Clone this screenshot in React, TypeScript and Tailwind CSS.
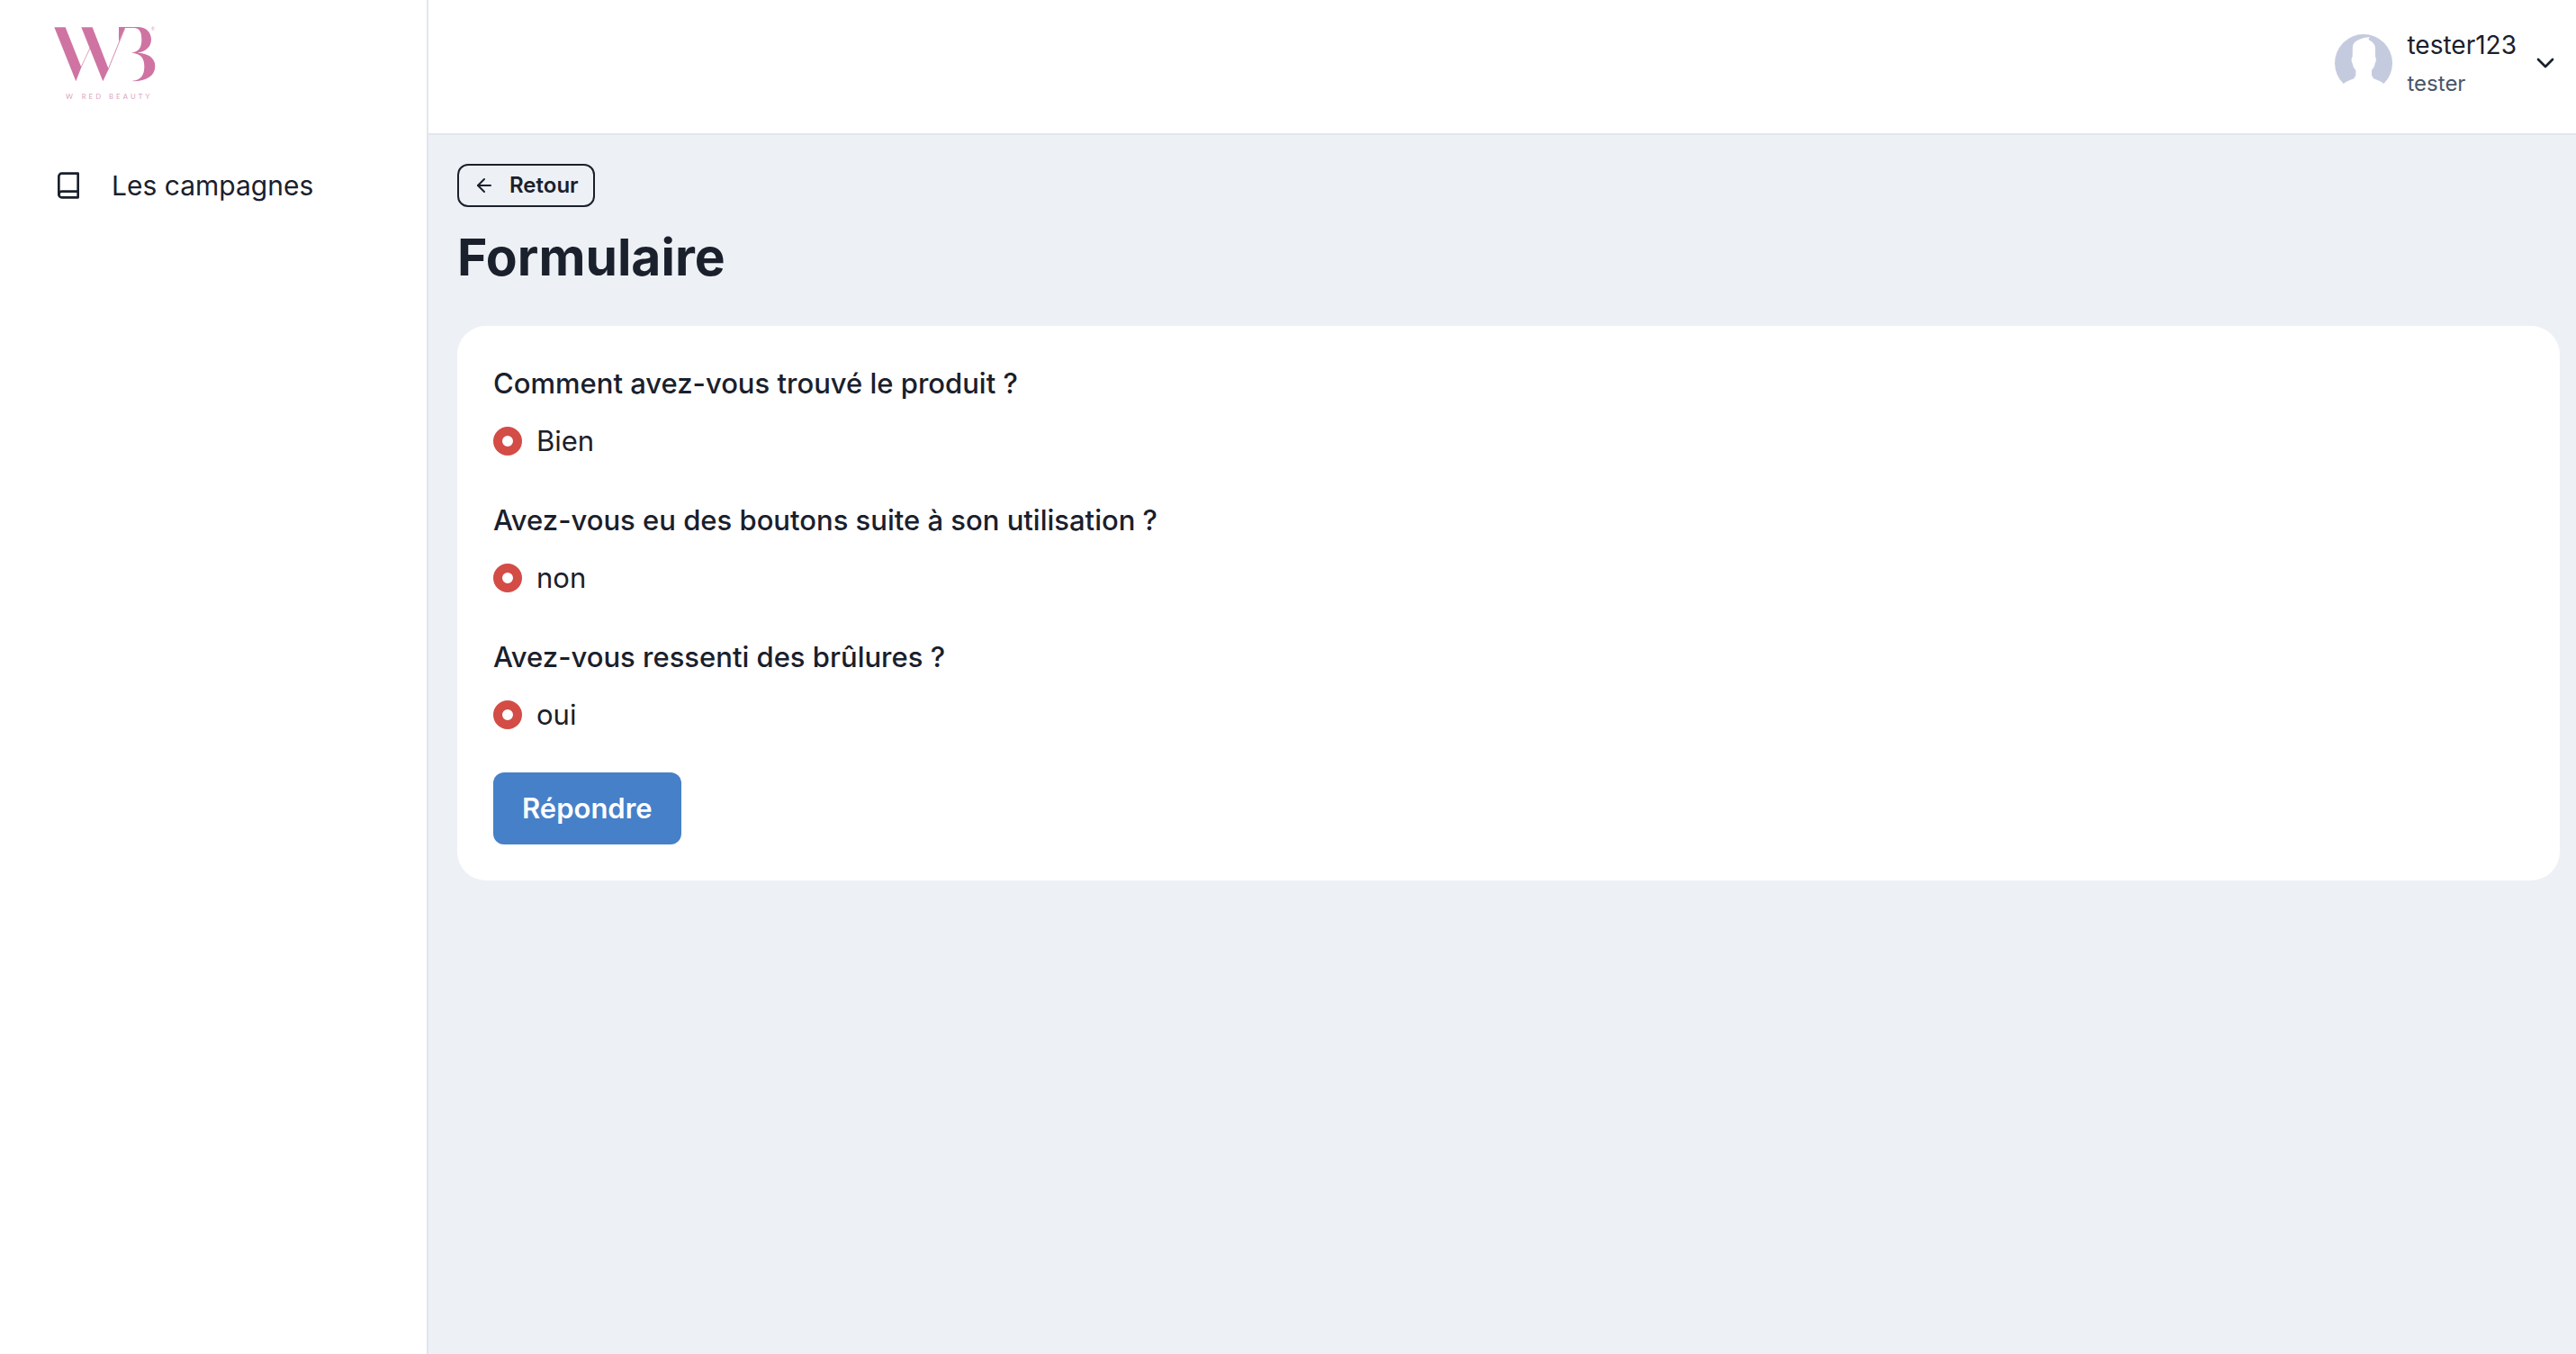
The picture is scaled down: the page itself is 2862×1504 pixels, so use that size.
import { FiArrowLeft, FiBook, FiChevronDown } from "react-icons/fi";

const questions = [
  { id: "produit", title: "Comment avez-vous trouvé le produit ?", answer: "Bien" },
  { id: "boutons", title: "Avez-vous eu des boutons suite à son utilisation ?", answer: "non" },
  { id: "brulures", title: "Avez-vous ressenti des brûlures ?", answer: "oui" },
];

function Logo() {
  return (
    <svg viewBox="60 48 348 258" className="h-[86px] w-[116px]" role="img" aria-label="W Red Beauty">
      <g fill="#cf74a2">
        <path d="M61 61H98L151 194L133 241Z" />
        <path d="M151 61H188L242 200L223 241Z" />
        <path d="M276 61H297L276 109Z" />
        <path d="M276 60H338C368 60 384 78 384 102C384 126 366 142 338 146C374 147 397 163 397 190C397 221 372 241 322 241V239C350 237 361 219 361 192C361 165 351 148 318 146C344 143 352 126 352 103C352 78 347 64 326 63H276Z" />
      </g>
      <path d="M150 194L180 130" stroke="#cf74a2" strokeWidth="2" />
      <path d="M240 202L296 64" stroke="#cf74a2" strokeWidth="2.5" />
      <text x="383" y="72" fontSize="15" fill="#dfa3c2" fontFamily="Lato, sans-serif">®</text>
      <text y="299" fontSize="23" letterSpacing="9.5" fill="#dda4c1" fontFamily="Lato, sans-serif">
        <tspan x="99">W </tspan>
        <tspan x="152">RED </tspan>
        <tspan x="243">BEAUTY</tspan>
      </text>
    </svg>
  );
}

function Avatar() {
  return (
    <svg viewBox="0 0 192 192" className="size-16" aria-hidden="true">
      <path
        fill="#c5cbdf"
        d="M29 165A96 96 0 1 1 163 165C154 156 138 152 129 148C128 143 123 141 123 136V120C130 113 133 105 134 97C138 92 139 82 135 74V46C135 36 126 25 113 19C112 16 114 13 117 10C95 11 74 18 64 30C58 37 60 50 59 74C54 82 55 92 59 97C60 105 63 113 70 120V136C70 141 65 143 64 148C55 152 39 156 29 165Z"
      />
    </svg>
  );
}

export default function App() {
  return (
    <div className="flex min-h-screen bg-[#edf0f5] font-['Inter',sans-serif] text-[31px] leading-[48px] text-[#1a202c]">
      <aside className="w-[476px] shrink-0 border-r-2 border-[#e2e6ee] bg-white">
        <div className="px-[60px] pt-[26px]">
          <Logo />
        </div>
        <nav className="mt-[70px] px-[60px] text-3xl leading-[48px]">
          <a href="#campagnes" className="flex items-center gap-8">
            <FiBook className="size-8" aria-hidden="true" />
            Les campagnes
          </a>
        </nav>
      </aside>

      <div className="min-w-0 flex-1">
        <header className="flex justify-end border-b-2 border-[#e2e6ee] bg-white pt-[29px] pr-[18px] pb-[37px]">
          <button type="button" className="flex items-center gap-4 text-left">
            <Avatar />
            <span className="flex flex-col gap-1">
              <span className="text-[28px] leading-[42px]">tester123</span>
              <span className="text-2xl leading-9 text-[#4a5568]">tester</span>
            </span>
            <FiChevronDown className="size-8" aria-hidden="true" />
          </button>
        </header>

        <main className="pt-8 pr-[18px] pl-8">
          <button
            type="button"
            className="flex h-12 items-center gap-4 rounded-xl border-2 border-[#1a202c] px-4 text-2xl font-semibold"
          >
            <FiArrowLeft className="size-6" aria-hidden="true" />
            Retour
          </button>
          <h1 className="mt-5 text-[57px] leading-[72px] font-bold">Formulaire</h1>

          <form className="mt-10 flex flex-col items-start gap-10 rounded-[32px] bg-white p-10" onSubmit={(e) => e.preventDefault()}>
            {questions.map((q) => (
              <fieldset key={q.id}>
                <legend className="font-medium">{q.title}</legend>
                <label className="mt-4 flex items-center gap-4">
                  <input
                    type="radio"
                    name={q.id}
                    defaultChecked
                    className="size-8 appearance-none rounded-full border-2 border-[#cbd5e0] bg-white checked:border-[10px] checked:border-[#d34c46]"
                  />
                  {q.answer}
                </label>
              </fieldset>
            ))}
            <button type="submit" className="h-20 rounded-xl bg-[#4680c8] px-8 font-semibold text-white">
              Répondre
            </button>
          </form>
        </main>
      </div>
    </div>
  );
}
